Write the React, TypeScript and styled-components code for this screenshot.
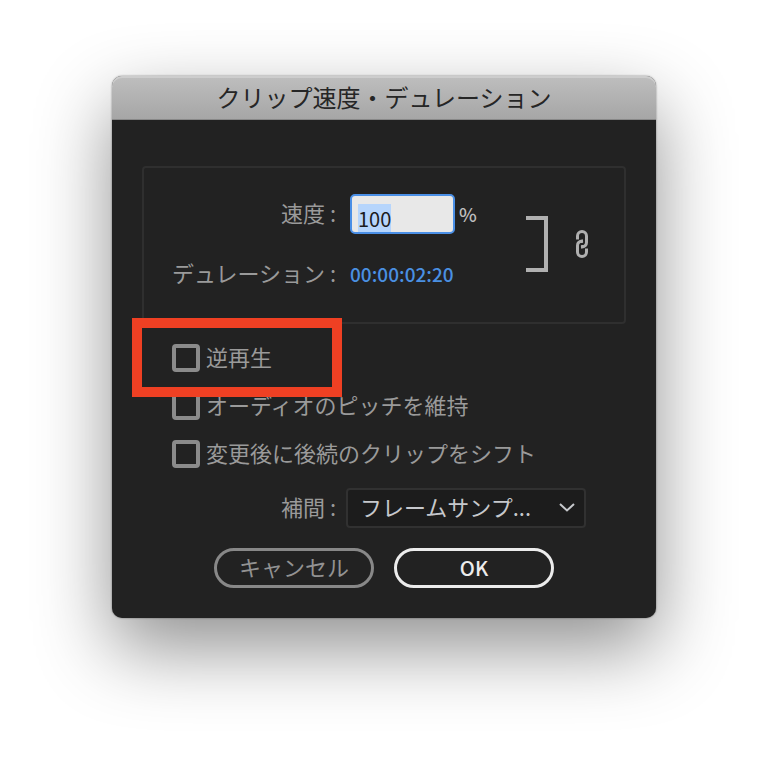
import React, { useEffect, useRef, useState } from "react";
import styled, { createGlobalStyle } from "styled-components";

const GlobalStyle = createGlobalStyle`
  * { box-sizing: border-box; }
  body {
    margin: 0;
    background: #fff;
    font-family: "Noto Sans CJK JP", "Noto Sans", sans-serif;
  }
  button, input, select { font: inherit; margin: 0; }
`;

const Page = styled.main`
  display: flex;
  justify-content: center;
  align-items: flex-start;
  min-height: 100vh;
  padding: 76px 24px;
`;

const Dialog = styled.section`
  width: 100%;
  max-width: 544px;
  border-radius: 10px;
  background: #222;
  color: #9a9a9a;
  font-size: 22px;
  line-height: 32px;
  box-shadow: 0 0 2px rgba(0, 0, 0, 0.5), 0 30px 76px rgba(0, 0, 0, 0.44);
`;

const TitleBar = styled.header`
  height: 44px;
  border-radius: 10px 10px 0 0;
  border-bottom: 1px solid #888;
  background: linear-gradient(#bebebe, #a6a6a6);
  box-shadow: inset 0 2px 0 #cdcdcd;
`;

const Title = styled.h1`
  margin: 0;
  color: #262626;
  font-size: 24px;
  font-weight: 400;
  line-height: 42px;
  text-align: center;
`;

const Form = styled.form`
  display: flex;
  flex-direction: column;
  padding: 46px 30px 30px;
`;

const TimingPanel = styled.div`
  display: flex;
  align-items: center;
  padding: 26px 36px 28px 28px;
  border: 2px solid #2f2f2f;
  border-radius: 4px;
`;

const TimingRows = styled.div`
  display: flex;
  flex-direction: column;
  gap: 20px;
  flex: 1;
`;

const Field = styled.div<{ $gap: number }>`
  display: flex;
  align-items: center;
  gap: ${(p) => p.$gap}px;
  height: 40px;
`;

const FieldLabel = styled.label`
  width: 164px;
  padding-bottom: 4px;
  text-align: right;
  white-space: nowrap;
`;

const SpeedInput = styled.input`
  width: 105px;
  height: 40px;
  padding: 8px 6px 0;
  border: 2px solid #4a8fe6;
  border-radius: 5px;
  outline: none;
  background: #e8e8e8;
  color: #1c1c1c;
  font-size: 20px;
  line-height: 28px;
  &::selection { background: #b6d5fc; color: #1c1c1c; }
`;

const Unit = styled.span`
  margin-left: -10px;
  color: #bdbdbd;
  font-size: 19px;
  font-weight: 500;
`;

const Timecode = styled.button`
  padding: 0;
  border: 0;
  background: none;
  color: #4a90e2;
  font-size: 19px;
  font-weight: 500;
  line-height: 32px;
`;

const LinkToggle = styled.button`
  display: flex;
  align-items: center;
  gap: 26px;
  padding: 0;
  border: 0;
  background: none;
  color: #b0b0b0;
`;

const Options = styled.div`
  position: relative;
  display: flex;
  flex-direction: column;
  gap: 16px;
  padding: 18px 30px 0;
`;

const Option = styled.label`
  display: flex;
  align-items: center;
  gap: 6px;
  height: 32px;
  white-space: nowrap;
`;

const OptionText = styled.span`
  padding-bottom: 4px;
`;

const Checkbox = styled.input`
  appearance: none;
  flex: none;
  width: 28px;
  height: 28px;
  border: 4px solid #8b8b8b;
  border-radius: 4px;
  &:checked { background: #8b8b8b; box-shadow: inset 0 0 0 3px #222; }
`;

const Highlight = styled.div`
  position: absolute;
  top: -6px;
  left: -10px;
  width: 210px;
  height: 79px;
  border: 10px solid #ef4023;
  pointer-events: none;
`;

const InterpolationRow = styled(Field)`
  margin: 18px 0 20px;
  padding-left: 30px;
`;

const SelectBox = styled.div`
  position: relative;
  width: 240px;
`;

const Select = styled.select`
  appearance: none;
  width: 100%;
  height: 40px;
  padding: 0 40px 4px 12px;
  border: 2px solid #313131;
  border-radius: 4px;
  background: #1c1c1c;
  color: #c6c8cc;
  font-family: "Liberation Sans Narrow", "Noto Sans CJK JP", sans-serif;
  line-height: 32px;
`;

const Chevron = styled.svg`
  position: absolute;
  top: 14px;
  right: 10px;
  pointer-events: none;
`;

const Actions = styled.div`
  display: flex;
  justify-content: center;
  gap: 20px;
`;

const ActionButton = styled.button<{ $primary?: boolean }>`
  width: 160px;
  height: 40px;
  padding: ${(p) => (p.$primary ? "0" : "0 0 4px")};
  border: 3px solid ${(p) => (p.$primary ? "#ececec" : "#888")};
  border-radius: 20px;
  background: transparent;
  color: ${(p) => (p.$primary ? "#ececec" : "#929292")};
  font-size: ${(p) => (p.$primary ? 20 : 22)}px;
  font-weight: ${(p) => (p.$primary ? 500 : 400)};
  line-height: 30px;
`;

const options = [
  "逆再生",
  "オーディオのピッチを維持",
  "変更後に後続のクリップをシフト",
];

export default function App() {
  const speedRef = useRef<HTMLInputElement>(null);
  const [speed, setSpeed] = useState("100");

  useEffect(() => {
    speedRef.current?.focus();
    speedRef.current?.select();
  }, []);

  return (
    <>
      <GlobalStyle />
      <Page lang="ja">
        <Dialog role="dialog" aria-labelledby="dialog-title">
          <TitleBar>
            <Title id="dialog-title">クリップ速度・デュレーション</Title>
          </TitleBar>
          <Form onSubmit={(e) => e.preventDefault()}>
            <TimingPanel>
              <TimingRows>
                <Field $gap={14}>
                  <FieldLabel htmlFor="speed">速度 :</FieldLabel>
                  <SpeedInput
                    id="speed"
                    ref={speedRef}
                    value={speed}
                    onChange={(e) => setSpeed(e.target.value)}
                  />
                  <Unit>%</Unit>
                </Field>
                <Field $gap={14}>
                  <FieldLabel htmlFor="duration">デュレーション :</FieldLabel>
                  <Timecode id="duration" type="button">00:00:02:20</Timecode>
                </Field>
              </TimingRows>
              <LinkToggle type="button" aria-label="速度とデュレーションをリンク">
                <svg width="24" height="56" viewBox="0 0 24 56" fill="none" aria-hidden="true">
                  <path d="M0 2H20V54H0" stroke="currentColor" strokeWidth="4" />
                </svg>
                <svg width="12" height="28" viewBox="0 0 12 28" fill="none" stroke="currentColor" strokeWidth="3" aria-hidden="true">
                  <path d="M1.5 9.5V6A4.5 4.5 0 0 1 10.5 6V12.5Q10.5 16.5 5 17.2" />
                  <path d="M10.5 18.5V22A4.5 4.5 0 0 1 1.5 22V15.5Q1.5 11.5 7 10.8" />
                  <path d="M5.8 10V13M6.2 15V18" strokeWidth="2" />
                </svg>
              </LinkToggle>
            </TimingPanel>
            <Options>
              {options.map((label) => (
                <Option key={label}>
                  <Checkbox type="checkbox" />
                  <OptionText>{label}</OptionText>
                </Option>
              ))}
              <Highlight />
            </Options>
            <InterpolationRow $gap={10}>
              <FieldLabel htmlFor="interpolation">補間 :</FieldLabel>
              <SelectBox>
                <Select id="interpolation">
                  <option>フレームサンプ...</option>
                </Select>
                <Chevron width="18" height="12" viewBox="0 0 18 12" fill="none" aria-hidden="true">
                  <path d="M2 2L9 8.5L16 2" stroke="#c6c8cc" strokeWidth="2" />
                </Chevron>
              </SelectBox>
            </InterpolationRow>
            <Actions>
              <ActionButton type="button">キャンセル</ActionButton>
              <ActionButton type="submit" $primary>OK</ActionButton>
            </Actions>
          </Form>
        </Dialog>
      </Page>
    </>
  );
}
